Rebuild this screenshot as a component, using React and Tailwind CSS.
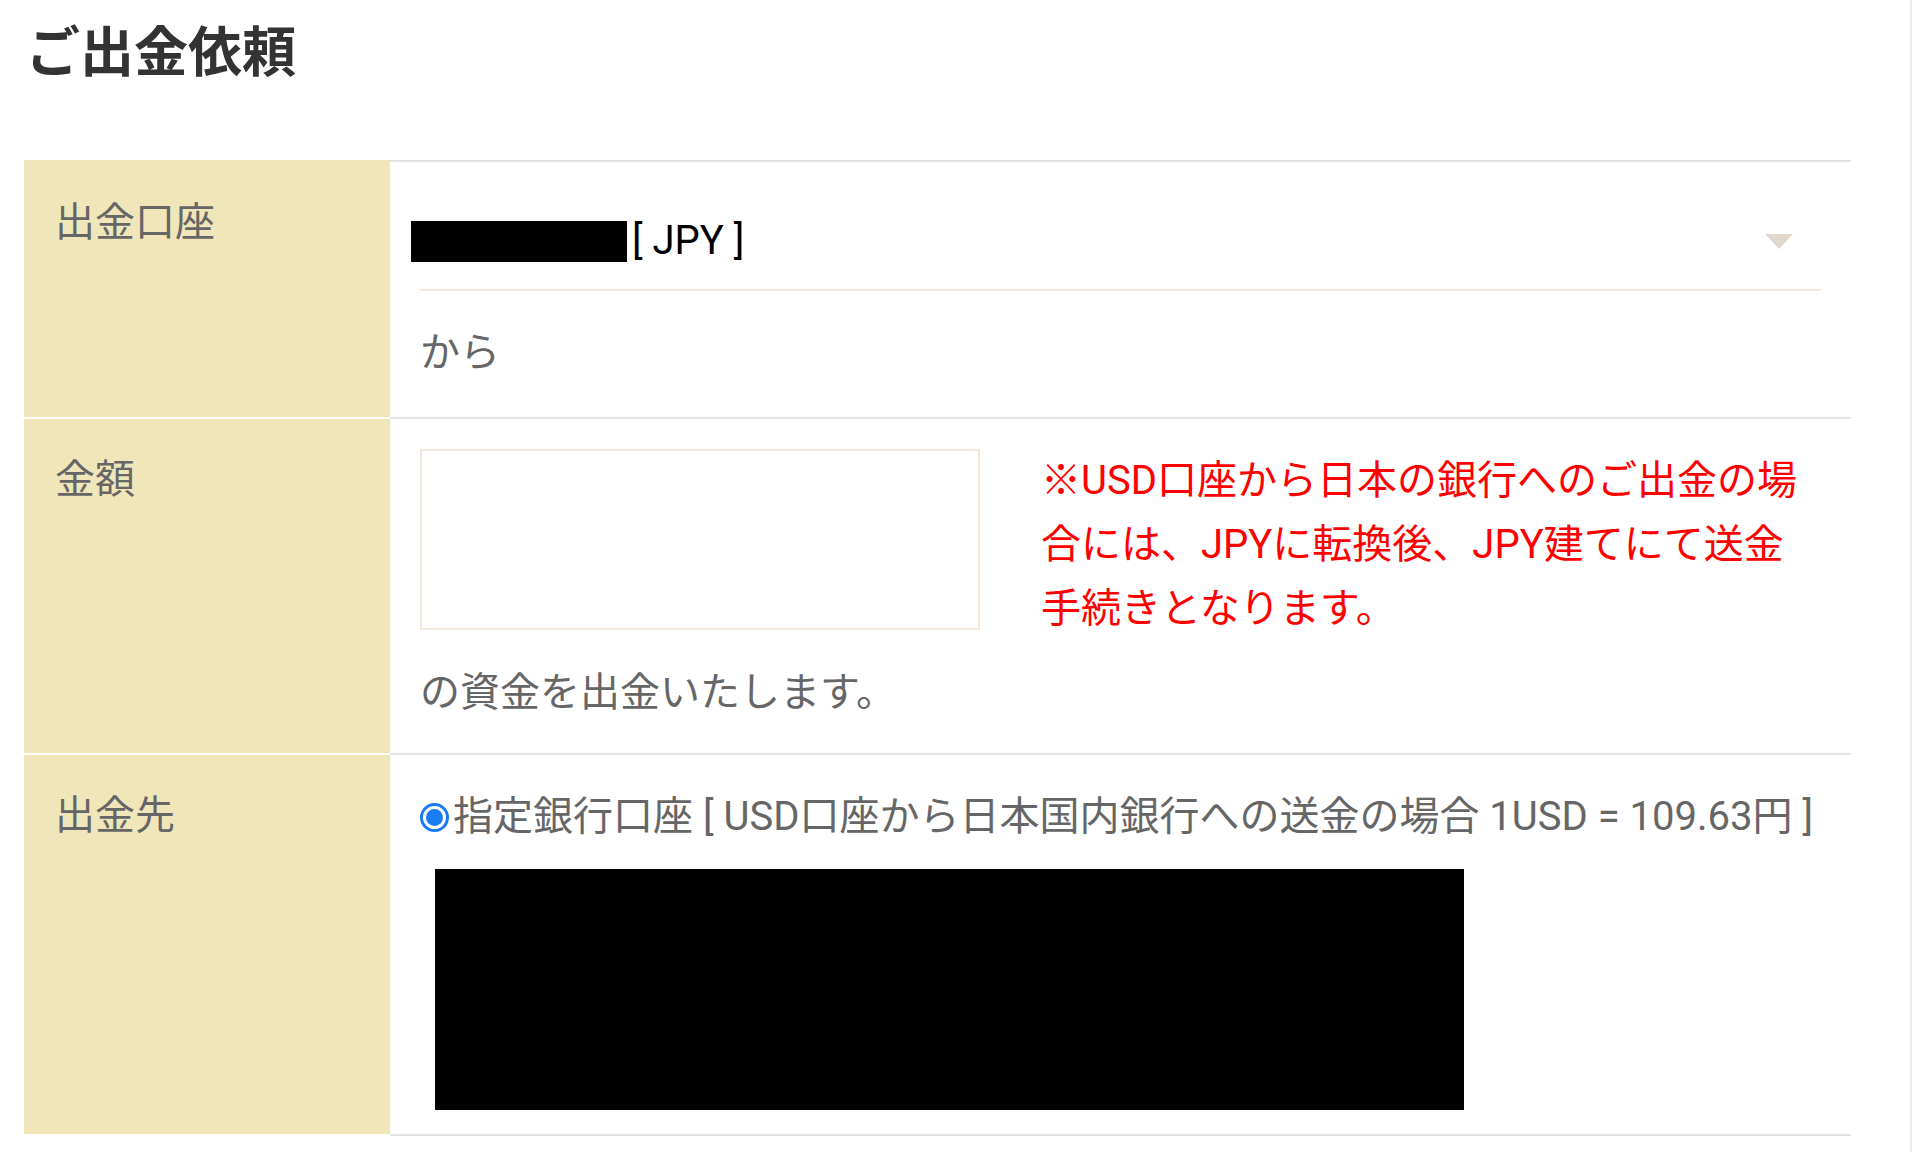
import { useState } from "react";

const font = { fontFamily: "Roboto, 'Noto Sans CJK JP', sans-serif" };

function Row({ label, first, children, className = "" }) {
  return (
    <div className="flex">
      <div
        className={`w-[366px] shrink-0 bg-[#f1e6ba] border-b-2 border-white pl-[31px] pt-[31px] text-[40px] leading-[60px] text-[#666] ${first ? "border-t-2 border-t-[#f1e6ba]" : ""}`}
      >
        {label}
      </div>
      <div className={`flex-1 border-b-2 border-[#e3e3e3] pl-[30px] pr-[30px] ${first ? "border-t-2 border-t-[#e3e3e3]" : ""} ${className}`}>
        {children}
      </div>
    </div>
  );
}

export default function App() {
  const [dest, setDest] = useState("bank");

  return (
    <div className="min-h-[1152px] w-[1912px] bg-white border-r-2 border-[#f1e8df]" style={font}>
      <h1 className="pl-[26px] pt-[24px] text-[54px] leading-[60px] font-bold text-[#333]">ご出金依頼</h1>

      <div className="mt-[76px] ml-[24px] w-[1827px]">
        {/* 出金口座 */}
        <Row label="出金口座" first className="pt-[29px] pb-[34px]">
          <div className="flex items-center h-[100px] border-b-2 border-[#f4e9dc]">
            <div className="flex items-center -ml-[9px] mt-[2px]">
              <span className="block w-[216px] h-[41px] bg-black" />
              <span className="ml-[5px] text-[40px] leading-none text-black">[ JPY ]</span>
            </div>
            <span className="ml-auto mr-[28px] mt-[2px] w-0 h-0 border-l-[14px] border-r-[14px] border-t-[15px] border-l-transparent border-r-transparent border-t-[#e0d8cc]" />
          </div>
          <p className="mt-[32px] text-[40px] leading-[60px] text-[#666]">から</p>
        </Row>

        {/* 金額 */}
        <Row label="金額" className="pt-[30px] pb-[30px]">
          <div className="flex items-start">
            <input type="text" className="w-[560px] h-[181px] border-2 border-[#f3e7d9] outline-none" />
            <p className="ml-[61px] w-[770px] text-[40px] leading-[64px] text-[#f00]">
              ※USD口座から日本の銀行へのご出金の場合には、JPYに転換後、JPY建てにて送金手続きとなります。
            </p>
          </div>
          <p className="mt-[22px] text-[40px] leading-[60px] text-[#666]">の資金を出金いたします。</p>
        </Row>

        {/* 出金先 */}
        <Row label="出金先" className="pt-[32px] pb-[24px]">
          <label className="flex items-center h-[60px] text-[40px] text-[#666] whitespace-nowrap cursor-pointer">
            <span className="flex items-center justify-center w-[29px] h-[29px] rounded-full border-[3px] border-[#1a7cf5] shrink-0">
              {dest === "bank" && <span className="block w-[17px] h-[17px] rounded-full bg-[#1a7cf5]" />}
            </span>
            <input type="radio" className="hidden" checked={dest === "bank"} onChange={() => setDest("bank")} />
            <span className="ml-[4px]">指定銀行口座 [ USD口座から日本国内銀行への送金の場合 1USD = 109.63円 ]</span>
          </label>
          <div className="mt-[22px] ml-[15px] w-[1029px] h-[241px] bg-black" />
        </Row>
      </div>
    </div>
  );
}
